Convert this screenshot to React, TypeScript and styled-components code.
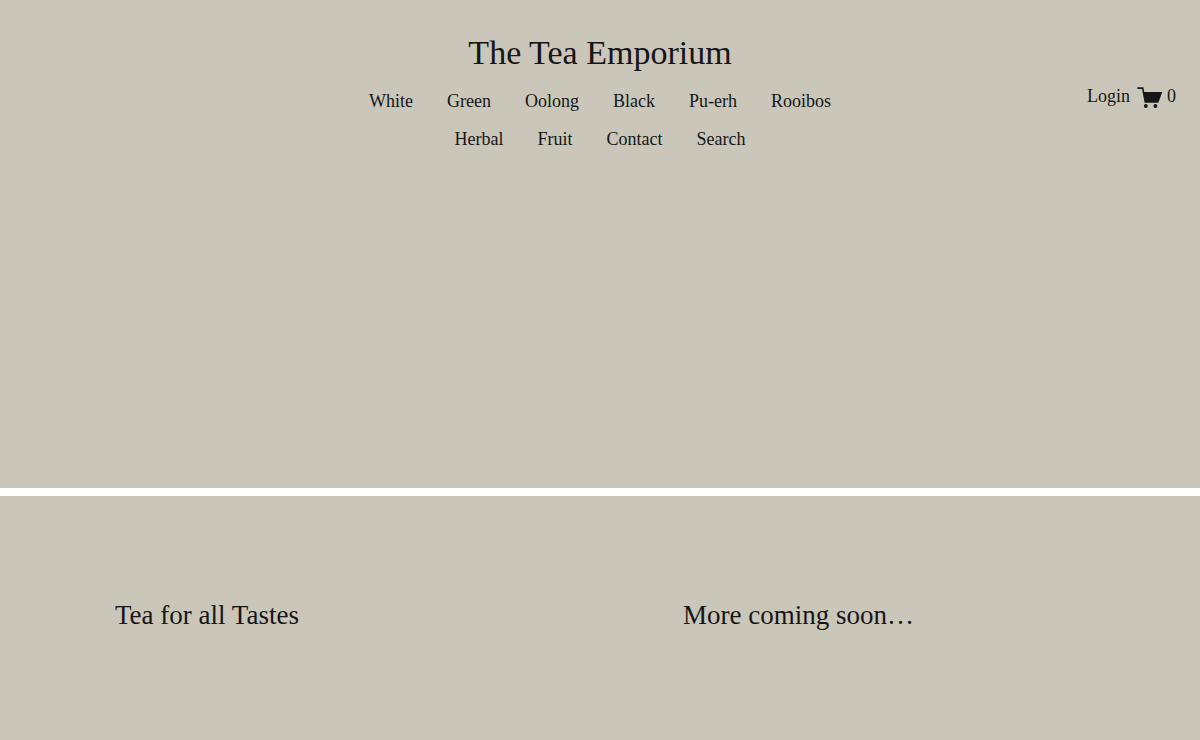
import React from "react";
import styled, { createGlobalStyle } from "styled-components";

const GlobalStyle = createGlobalStyle`
  * { box-sizing: border-box; }
  body {
    margin: 0;
    background: #fff;
    color: #161616;
    font-family: "Liberation Serif", serif;
  }
`;

const Page = styled.div`
  display: flex;
  flex-direction: column;
  gap: 8px;
  min-height: 100vh;
`;

const Hero = styled.div`
  min-height: 488px;
  background: #cac6b9;
`;

const Header = styled.header`
  display: grid;
  grid-template-columns: 1fr minmax(0, 500px) 1fr;
  align-items: center;
  padding: 30px 24px 0;
`;

const Brand = styled.div`
  grid-column: 2;
  display: flex;
  flex-direction: column;
  align-items: center;
  gap: 6px;
`;

const Title = styled.h1`
  margin: 0;
  font-size: 34px;
  line-height: 46px;
  font-weight: 400;
`;

const Nav = styled.nav`
  display: flex;
  flex-wrap: wrap;
  justify-content: center;
  column-gap: 34px;
`;

const TextLink = styled.a`
  color: inherit;
  text-decoration: none;
  font-size: 18px;
  line-height: 38px;
`;

const Account = styled.div`
  display: flex;
  justify-content: flex-end;
  align-items: center;
  gap: 7px;
  padding-top: 4px;
`;

const CartLink = styled(TextLink)`
  display: flex;
  align-items: center;
  gap: 4px;
`;

const Sections = styled.main`
  flex: 1;
  display: grid;
  grid-template-columns: 1fr 1fr;
  column-gap: 166px;
  min-height: 244px;
  padding: 100px 115px;
  background: #cac6b9;
`;

const Heading = styled.h2`
  margin: 0;
  font-size: 27px;
  line-height: 38px;
  font-weight: 400;
`;

const links = ["White", "Green", "Oolong", "Black", "Pu-erh", "Rooibos", "Herbal", "Fruit", "Contact", "Search"];

const CartIcon = () => (
  <svg width="26" height="24" viewBox="0 0 26 24" fill="#161616" aria-hidden="true">
    <path d="M.4 3.2H6.4L7.2 7.9H25.3L21.3 18.8H7.6L5 5H.4z" />
    <circle cx="8.8" cy="22" r="1.9" />
    <circle cx="18.4" cy="22" r="1.9" />
  </svg>
);

export default function App() {
  return (
    <Page>
      <GlobalStyle />
      <Hero>
        <Header>
          <Brand>
            <Title>The Tea Emporium</Title>
            <Nav aria-label="Main">
              {links.map((name) => (
                <TextLink key={name} href="#">{name}</TextLink>
              ))}
            </Nav>
          </Brand>
          <Account>
            <TextLink href="#">Login</TextLink>
            <CartLink href="#">
              <CartIcon />
              <span>0</span>
            </CartLink>
          </Account>
        </Header>
      </Hero>
      <Sections>
        <Heading>Tea for all Tastes</Heading>
        <Heading>More coming soon…</Heading>
      </Sections>
    </Page>
  );
}
